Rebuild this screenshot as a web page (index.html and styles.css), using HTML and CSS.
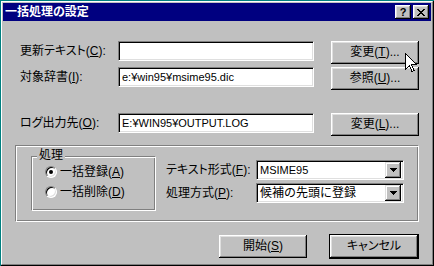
FILE: index.html
```html
<!DOCTYPE html>
<html lang="ja">
<head>
    <meta charset="UTF-8">
    <title>一括処理の設定</title>
    <link rel="stylesheet" href="styles.css">
</head>
<body>
<div class="window">
    <div class="frame">
        <div class="titleBar">
            <span class="titleText">一括処理の設定</span>
            <span class="capBtn helpBtn">?</span>
            <span class="capBtn closeBtn">
                <svg width="8" height="7" viewBox="0 0 8 7" shape-rendering="crispEdges">
                    <path d="M0 0h2v1h-2zM6 0h2v1h-2zM1 1h2v1h-2zM5 1h2v1h-2zM2 2h4v1h-4zM3 3h2v1h-2zM2 4h4v1h-4zM1 5h2v1h-2zM5 5h2v1h-2zM0 6h2v1h-2zM6 6h2v1h-2z" fill="#000"/>
                </svg>
            </span>
        </div>

        <div class="dlgBody">
            <div class="row">
                <label class="rowLabel">更新テキスト(<u>C</u>):</label>
                <div class="edit"></div>
                <button class="btn">変更(<u>T</u>)...</button>
            </div>
            <div class="row row2">
                <label class="rowLabel">対象辞書(<u>I</u>):</label>
                <div class="edit">e:¥win95¥msime95.dic</div>
                <button class="btn">参照(<u>U</u>)...</button>
            </div>
            <div class="row row3">
                <label class="rowLabel">ログ出力先(<u>O</u>):</label>
                <div class="edit">E:¥WIN95¥OUTPUT.LOG</div>
                <button class="btn">変更(<u>L</u>)...</button>
            </div>

            <div class="group">
                <div class="inner">
                    <span class="legend">処理</span>
                    <div class="radioItem"><span class="radio checked"></span>一括登録(<u>A</u>)</div>
                    <div class="radioItem"><span class="radio"></span>一括削除(<u>D</u>)</div>
                </div>
                <div class="fields">
                    <div class="field">
                        <label class="fieldLabel">テキスト形式(<u>F</u>):</label>
                        <div class="combo">
                            <span class="comboText latin">MSIME95</span>
                            <span class="dropBtn"><svg width="7" height="4" viewBox="0 0 7 4" shape-rendering="crispEdges"><path d="M0 0h7v1h-7zM1 1h5v1h-5zM2 2h3v1h-3zM3 3h1v1h-1z" fill="#000"/></svg></span>
                        </div>
                    </div>
                    <div class="field">
                        <label class="fieldLabel">処理方式(<u>P</u>):</label>
                        <div class="combo">
                            <span class="comboText">候補の先頭に登録</span>
                            <span class="dropBtn"><svg width="7" height="4" viewBox="0 0 7 4" shape-rendering="crispEdges"><path d="M0 0h7v1h-7zM1 1h5v1h-5zM2 2h3v1h-3zM3 3h1v1h-1z" fill="#000"/></svg></span>
                        </div>
                    </div>
                </div>
            </div>

            <div class="footer">
                <button class="btn">開始(<u>S</u>)</button>
                <div class="defaultBtn"><button class="btn">キャンセル</button></div>
            </div>
        </div>
    </div>

    <!-- mouse pointer over the first button -->
    <svg class="cursor" width="12" height="20" viewBox="0 0 12 20" shape-rendering="crispEdges">
        <path d="M0.5 0.5V16.5L4.5 12.5L7 18.5L9 17.5L6.5 11.5H11.5Z" fill="#fff" stroke="#000" stroke-width="1"/>
    </svg>
</div>
</body>
</html>
```

FILE: styles.css
```css
* {
    margin: 0;
    padding: 0;
    box-sizing: border-box;
}

html, body {
    width: 434px;
    height: 266px;
    overflow: hidden;
}

body {
    background-color: #008080;
    font: 12px/14px "Liberation Sans", "Noto Sans CJK JP", sans-serif;
    font-feature-settings: "palt";
    color: #000;
}

u {
    text-decoration: underline;
    text-underline-offset: 1px;
}

.window {
    margin: 1px 0 0 1px;
    width: 433px;
    height: 265px;
    background-color: #c0c0c0;
    border-right: 1px solid #000;
    border-bottom: 1px solid #000;
    position: relative;
}

.frame {
    height: 100%;
    border-top: 1px solid #fff;
    border-left: 1px solid #fff;
    border-right: 1px solid #808080;
    border-bottom: 1px solid #808080;
    padding: 1px;
}

.titleBar {
    height: 18px;
    background-color: #000080;
    color: #fff;
    display: flex;
    align-items: center;
    padding: 0 2px;
}

.titleText {
    flex: 1;
    font-weight: bold;
    font-size: 12px;
    line-height: 16px;
}

.capBtn {
    width: 16px;
    height: 14px;
    background-color: #c0c0c0;
    box-shadow: inset -1px -1px #000, inset 1px 1px #fff, inset -2px -2px #808080, inset 2px 2px #dfdfdf;
    display: flex;
    align-items: center;
    justify-content: center;
    color: #000;
}

.helpBtn {
    margin-right: 2px;
    font: bold 11px/12px "Liberation Sans", sans-serif;
}

.dlgBody {
    padding-top: 20px;
}

.row {
    display: flex;
    align-items: flex-start;
    margin-left: 17px;
}

.row2 {
    margin-top: 3px;
}

.row3 {
    margin-top: 23px;
}

.rowLabel {
    width: 98px;
    line-height: 20px;
}

.edit {
    width: 196px;
    height: 20px;
    background-color: #fff;
    border: 1px solid;
    border-color: #808080 #fff #fff #808080;
    box-shadow: inset 1px 1px #000, inset -1px -1px #dfdfdf;
    padding: 0 3px;
    font: 11px/18px "Liberation Sans", sans-serif;
    white-space: nowrap;
}

.btn {
    width: 88px;
    height: 23px;
    background-color: #c0c0c0;
    border: none;
    box-shadow: inset -1px -1px #000, inset 1px 1px #fff, inset -2px -2px #808080, inset 2px 2px #dfdfdf;
    font: inherit;
    color: #000;
    line-height: 21px;
}

.row .btn {
    margin-left: 17px;
}

.group {
    margin: 9px 0 0 12px;
    width: 404px;
    height: 77px;
    border: 1px solid;
    border-color: #808080 #fff #fff #808080;
    box-shadow: inset 1px 1px #fff, inset -1px -1px #808080;
    display: flex;
    align-items: flex-start;
}

.inner {
    margin: 10px 0 0 15px;
    width: 125px;
    height: 55px;
    border: 1px solid;
    border-color: #808080 #fff #fff #808080;
    box-shadow: inset 1px 1px #fff, inset -1px -1px #808080;
    position: relative;
    padding: 5px 0 0 13px;
}

.legend {
    position: absolute;
    left: 5px;
    top: -9px;
    padding: 0 2px;
    background-color: #c0c0c0;
}

.radioItem {
    display: flex;
    align-items: center;
    height: 20px;
}

.radio {
    width: 12px;
    height: 12px;
    border-radius: 50%;
    background-color: #fff;
    border: 1px solid;
    border-color: #808080 #fff #fff #808080;
    box-shadow: inset 1px 1px #000, inset -1px -1px #dfdfdf;
    margin-right: 3px;
    position: relative;
}

.checked::after {
    content: "";
    position: absolute;
    left: 3px;
    top: 3px;
    width: 4px;
    height: 4px;
    border-radius: 50%;
    background-color: #000;
}

.fields {
    margin: 14px 0 0 10px;
}

.field {
    display: flex;
    align-items: center;
    height: 20px;
    margin-bottom: 3px;
}

.fieldLabel {
    width: 90px;
}

.combo {
    width: 148px;
    height: 20px;
    background-color: #fff;
    border: 1px solid;
    border-color: #808080 #fff #fff #808080;
    box-shadow: inset 1px 1px #000, inset -1px -1px #dfdfdf;
    padding: 2px 2px 2px 3px;
    display: flex;
    align-items: center;
}

.comboText {
    flex: 1;
    font-feature-settings: normal;
    white-space: nowrap;
}

.latin {
    font-size: 11px;
}

.dropBtn {
    width: 16px;
    height: 16px;
    background-color: #c0c0c0;
    box-shadow: inset -1px -1px #000, inset 1px 1px #dfdfdf, inset -2px -2px #808080, inset 2px 2px #fff;
    display: flex;
    align-items: center;
    justify-content: center;
}

.footer {
    display: flex;
    align-items: center;
    margin: 12px 0 0 216px;
}

.defaultBtn {
    margin-left: 22px;
    border: 1px solid #000;
}

.defaultBtn .btn {
    display: block;
}

.cursor {
    position: absolute;
    left: 404px;
    top: 52px;
}
```
